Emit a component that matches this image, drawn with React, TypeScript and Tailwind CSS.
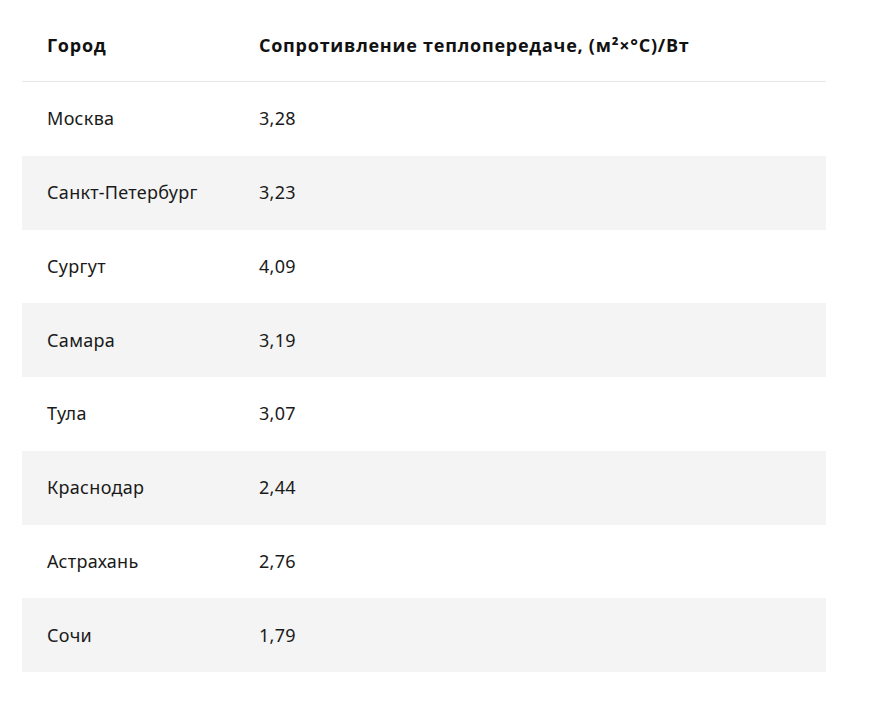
import React from "react";

const rows: [string, string][] = [
  ["Москва", "3,28"],
  ["Санкт-Петербург", "3,23"],
  ["Сургут", "4,09"],
  ["Самара", "3,19"],
  ["Тула", "3,07"],
  ["Краснодар", "2,44"],
  ["Астрахань", "2,76"],
  ["Сочи", "1,79"],
];

export default function App() {
  return (
    <div className="min-h-[703px] bg-white pt-[9px] pl-[22px]">
      <div className="w-[804px] text-[#111]">
        <div className="flex h-[73px] items-center border-b border-[#e6e6e6] font-['Open_Sans',sans-serif] text-[18px] font-bold tracking-[0.75px]">
          <div className="w-[212px] pl-[25px]">Город</div>
          <div className="pl-[25px]">Сопротивление теплопередаче, (м²×°С)/Вт</div>
        </div>
        {rows.map(([city, val], i) => (
          <div
            key={city}
            className={
              "flex h-[73.75px] items-center font-['Noto_Sans',sans-serif] text-[18px] tracking-[0.3px] text-[#1a1a1a] " +
              (i % 2 === 1 ? "bg-[#f4f4f4]" : "bg-white")
            }
          >
            <div className="w-[212px] pl-[25px]">{city}</div>
            <div className="pl-[25px]">{val}</div>
          </div>
        ))}
      </div>
    </div>
  );
}
